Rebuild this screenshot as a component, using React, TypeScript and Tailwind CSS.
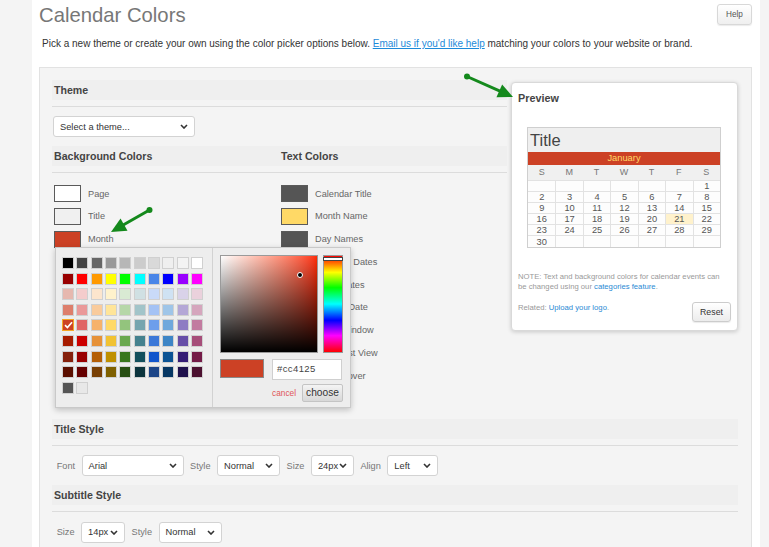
import React from "react";

const palette: string[][] = [
  ["#000000", "#444444", "#666666", "#999999", "#b7b7b7", "#cccccc", "#d9d9d9", "#efefef", "#f3f3f3", "#ffffff"],
  ["#980000", "#ff0000", "#ff9900", "#ffff00", "#00ff00", "#00ffff", "#4a86e8", "#0000ff", "#9900ff", "#ff00ff"],
  ["#e6b8af", "#f4cccc", "#fce5cd", "#fff2cc", "#d9ead3", "#d0e0e3", "#c9daf8", "#cfe2f3", "#d9d2e9", "#ead1dc"],
  ["#dd7e6b", "#ea9999", "#f9cb9c", "#ffe599", "#b6d7a8", "#a2c4c9", "#a4c2f4", "#9fc5e8", "#b4a7d6", "#d5a6bd"],
  ["#cc4125", "#e06666", "#f6b26b", "#ffd966", "#93c47d", "#76a5af", "#6d9eeb", "#6fa8dc", "#8e7cc3", "#c27ba0"],
  ["#a61c00", "#cc0000", "#e69138", "#f1c232", "#6aa84f", "#45818e", "#3c78d8", "#3d85c6", "#674ea7", "#a64d79"],
  ["#85200c", "#990000", "#b45f06", "#bf9000", "#38761d", "#134f5c", "#1155cc", "#0b5394", "#351c75", "#741b47"],
  ["#5b0f00", "#660000", "#783f04", "#7f6000", "#274e13", "#0c343d", "#1c4587", "#073763", "#20124d", "#4c1130"],
  ["#555555", "#e8e8e8"],
];

const textColors: { label: string; color: string }[] = [
  { label: "Calendar Title", color: "#555555" },
  { label: "Month Name", color: "#ffd966" },
  { label: "Day Names", color: "#555555" },
  { label: "Selected Dates", color: "#555555" },
  { label: "Other Dates", color: "#555555" },
  { label: "Today's Date", color: "#555555" },
  { label: "Event Window", color: "#555555" },
  { label: "Event List View", color: "#555555" },
  { label: "Event Hover", color: "#555555" },
];

const bgColors: { label: string; color: string }[] = [
  { label: "Page", color: "#ffffff" },
  { label: "Title", color: "#f0f0f0" },
  { label: "Month", color: "#cc4125" },
];

const weeks: (number | null)[][] = [
  [null, null, null, null, null, null, 1],
  [2, 3, 4, 5, 6, 7, 8],
  [9, 10, 11, 12, 13, 14, 15],
  [16, 17, 18, 19, 20, 21, 22],
  [23, 24, 25, 26, 27, 28, 29],
  [30, null, null, null, null, null, null],
];

function Chevron() {
  return (
    <svg width="8" height="5" viewBox="0 0 8 5">
      <path d="M1 1 L4 4 L7 1" fill="none" stroke="#333" strokeWidth="1.6" />
    </svg>
  );
}

function Sel({ className, value }: { className: string; value: string }) {
  return (
    <div
      className={
        "flex h-[21px] shrink-0 items-center justify-between rounded-[3px] border border-[#d3d3d3] bg-white pl-[6px] pr-[6px] text-[9.3px] leading-[12px] text-[#333] " +
        className
      }
    >
      <span>{value}</span>
      <Chevron />
    </div>
  );
}

function Band({ children }: { children: React.ReactNode }) {
  return (
    <>
      <div className="flex h-[20px] items-center bg-[#efefef] pl-[2px] text-[10.6px] font-bold leading-[12px] text-[#444]">
        {children}
      </div>
      <div className="mt-[6px] h-px bg-[#dcdcdc]" />
    </>
  );
}

function Label({ children }: { children: React.ReactNode }) {
  return <span className="text-[9.2px] leading-[12px] text-[#777]">{children}</span>;
}

function arrow(x1: number, y1: number, x2: number, y2: number, L = 15, W = 7) {
  const dx = x2 - x1;
  const dy = y2 - y1;
  const len = Math.sqrt(dx * dx + dy * dy);
  const ux = dx / len;
  const uy = dy / len;
  const bx = x2 - ux * L;
  const by = y2 - uy * L;
  const nx = -uy;
  const ny = ux;
  return {
    line: { x1, y1, x2: bx + ux * 2, y2: by + uy * 2 },
    pts: `${x2},${y2} ${bx + nx * W},${by + ny * W} ${bx - nx * W},${by - ny * W}`,
  };
}

function Arrows() {
  const list = [arrow(467, 76.5, 513, 97), arrow(149.5, 210, 111, 232), arrow(228.5, 403.5, 273, 381.5)];
  const g = "#14891c";
  return (
    <svg className="pointer-events-none absolute left-0 top-0" width="769" height="547" viewBox="0 0 769 547">
      {list.map((a, i) => (
        <g key={i}>
          <line x1={a.line.x1} y1={a.line.y1} x2={a.line.x2} y2={a.line.y2} stroke={g} strokeWidth="3" strokeLinecap="round" />
          <circle cx={a.line.x1} cy={a.line.y1} r="3" fill={g} />
          <polygon points={a.pts} fill={g} />
        </g>
      ))}
    </svg>
  );
}

function Popup() {
  return (
    <div className="absolute left-[3px] top-[62px] z-10 flex h-[161px] w-[296px] border border-[#c9c9c9] bg-[#ededed] shadow-[0_2px_6px_rgba(0,0,0,0.22)]">
      <div className="w-[157px] border-r border-[#d2d2d2] pl-[6px] pt-[9px]">
        <div className="grid grid-cols-[repeat(10,12px)] gap-x-[2.33px] gap-y-[3.6px]">
          {palette.map((row, ri) =>
            row.map((c, ci) => {
              const sel = ri === 4 && ci === 0;
              return (
                <div
                  key={ri + "-" + ci}
                  className={
                    sel
                      ? "flex h-[12px] w-[12px] items-center justify-center border border-[#f5a623]"
                      : "h-[12px] w-[12px] border border-[#d0d0d0]"
                  }
                  style={{ background: c }}
                >
                  {sel && (
                    <svg width="9" height="8" viewBox="0 0 9 8">
                      <path d="M1 4.2 L3.4 6.5 L8 1.2" fill="none" stroke="#fff" strokeWidth="1.7" />
                    </svg>
                  )}
                </div>
              );
            })
          )}
        </div>
      </div>
      <div className="flex-1 pl-[7px] pt-[7px]">
        <div className="flex">
          <div className="relative h-[98px] w-[98px] border border-[#9a9a9a] bg-linear-to-r from-white to-[#ff2b00]">
            <div className="absolute inset-0 bg-linear-to-t from-black to-transparent" />
            <div className="absolute left-[76px] top-[16px] h-[6px] w-[6px] rounded-full border border-white bg-black" />
          </div>
          <div className="relative ml-[5px] h-[98px] w-[20px] border border-[#9a9a9a] bg-[linear-gradient(to_bottom,#ff0000,#ffff00_17%,#00ff00_33%,#00ffff_50%,#0000ff_67%,#ff00ff_83%,#ff0000)]">
            <div className="absolute left-[-1px] right-[-1px] top-[1px] h-[4px] border border-[#444] bg-white" />
          </div>
        </div>
        <div className="mt-[6px] flex items-start">
          <div className="h-[19px] w-[44px] border border-[#8a8a8a] bg-[#cc4125]" />
          <div className="ml-[8px] flex h-[21px] w-[70px] items-center border border-[#cfcfcf] bg-white pl-[4px] text-[9.5px] tracking-[0.4px] text-[#444]">
            #cc4125
          </div>
        </div>
        <div className="mt-[4px] flex items-center pl-[52px]">
          <span className="text-[8.3px] leading-[10px] text-[#e0555a]">cancel</span>
          <div className="ml-[6px] flex h-[18px] w-[41px] items-center justify-center rounded-[2px] border border-[#c4c4c4] bg-linear-to-b from-[#f4f4f4] to-[#d8d8d8] text-[10.2px] leading-[12px] text-[#333]">
            choose
          </div>
        </div>
      </div>
    </div>
  );
}

function Preview() {
  return (
    <div className="ml-[4px] mt-[1.5px] h-[249px] w-[227px] shrink-0 rounded-[4px] border border-[#d9d9d9] bg-white shadow-[0_1px_4px_rgba(0,0,0,0.18)]">
      <div className="pl-[6px] pt-[9px] text-[10.8px] font-bold leading-[12px] text-[#444]">Preview</div>
      <div className="ml-[15px] mt-[23px] w-[194px] border border-[#cfcfcf]">
        <div className="flex h-[24px] items-center bg-[#efefef] pl-[2px] text-[16.5px] leading-[20px] text-[#444]">Title</div>
        <div className="flex h-[13.5px] items-center justify-center bg-[#cc4125] text-[9.3px] leading-[11px] text-[#ffd966]">
          January
        </div>
        <div className="grid h-[15px] grid-cols-7 items-center bg-[#f0f0f0] text-center text-[9px] leading-[11px] text-[#777]">
          {["S", "M", "T", "W", "T", "F", "S"].map((d, i) => (
            <span key={i}>{d}</span>
          ))}
        </div>
        {weeks.map((w, wi) => (
          <div key={wi} className="grid h-[11.1px] grid-cols-7">
            {w.map((d, di) => (
              <div
                key={di}
                className={
                  (di === 0 ? "border-t " : "border-l border-t ") +
                  "flex items-center justify-center border-[#e2e2e2] text-[9.3px] leading-[10px] text-[#555] " +
                  (d === 21 ? "bg-[#fff2cc]" : "bg-[#fdfdfd]")
                }
              >
                {d ?? ""}
              </div>
            ))}
          </div>
        ))}
      </div>
      <div className="mt-[24px] w-[215px] pl-[6px] text-[7.7px] leading-[10px] text-[#999]">
        <div>NOTE: Text and background colors for calendar events can</div>
        <div>
          be changed using our <span className="text-[#2a8ad4]">categories feature</span>.
        </div>
      </div>
      <div className="mt-[10px] flex items-start justify-between pl-[6px] pr-[6px]">
        <div className="pt-[1px] text-[7.7px] leading-[10px] text-[#999]">
          Related: <span className="text-[#2a8ad4]">Upload your logo</span>.
        </div>
        <div className="flex h-[20px] w-[39px] items-center justify-center rounded-[3px] border border-[#cccccc] bg-linear-to-b from-white to-[#ececec] text-[8.8px] leading-[10px] text-[#333] shadow-[0_1px_1px_rgba(0,0,0,0.08)]">
          Reset
        </div>
      </div>
    </div>
  );
}

export default function App() {
  return (
    <div className="relative h-[547px] w-[769px] overflow-hidden bg-[#f4f4f4] font-['Liberation_Sans',Arial,sans-serif]">
      <div className="ml-[32px] h-full w-[728px] bg-white px-[7px]">
        <div className="flex h-[31px] items-start justify-between">
          <div className="pt-[3px] text-[20.3px] leading-[24px] text-[#777]">Calendar Colors</div>
          <div className="mr-[1px] mt-[4px] flex h-[21px] w-[35px] items-center justify-center rounded-[3px] border border-[#d8d8d8] bg-linear-to-b from-white to-[#efefef] text-[8.2px] leading-[10px] text-[#555] shadow-[0_1px_1px_rgba(0,0,0,0.08)]">
            Help
          </div>
        </div>
        <div className="mt-[7px] pl-[3px] text-[10px] leading-[12px] text-[#333]">
          Pick a new theme or create your own using the color picker options below.{" "}
          <span className="text-[#1d8ad9] underline">Email us if you'd like help</span> matching your colors to your
          website or brand.
        </div>
        <div className="mt-[17px] h-[600px] w-[713px] border border-[#e2e2e2] bg-[#f4f4f4] pl-[12px] pr-[13px] pt-[12px]">
          <div className="flex items-start">
            <div className="w-[455px] shrink-0">
              <Band>Theme</Band>
              <div className="mt-[9px] pl-[1px]">
                <Sel className="w-[142px]" value="Select a theme..." />
              </div>
              <div className="mt-[9px] flex h-[20px] items-center bg-[#efefef] text-[10.6px] font-bold leading-[12px] text-[#444]">
                <span className="w-[229px] pl-[2px]">Background Colors</span>
                <span>Text Colors</span>
              </div>
              <div className="mt-[6px] h-px bg-[#dcdcdc]" />
              <div className="relative mt-[12px] flex">
                <div className="flex w-[229px] flex-col gap-[5.75px] pl-[2px]">
                  {bgColors.map((c) => (
                    <div key={c.label} className="flex h-[17px] items-center">
                      <div className="h-[17px] w-[27px] border border-[#5a5a5a]" style={{ background: c.color }} />
                      <span className="ml-[7px] text-[9.2px] leading-[12px] text-[#666]">{c.label}</span>
                    </div>
                  ))}
                </div>
                <div className="flex flex-col gap-[5.75px]">
                  {textColors.map((c) => (
                    <div key={c.label} className="flex h-[17px] items-center">
                      <div className="h-[17px] w-[27px] border border-[#5a5a5a]" style={{ background: c.color }} />
                      <span className="ml-[7px] whitespace-nowrap text-[9.2px] leading-[12px] text-[#666]">{c.label}</span>
                    </div>
                  ))}
                </div>
                <Popup />
              </div>
            </div>
            <Preview />
          </div>
          <div className="mt-[35px]">
            <Band>Title Style</Band>
            <div className="mt-[9px] flex items-center gap-[6.5px] pl-[4.7px]">
              <Label>Font</Label>
              <Sel className="w-[102px]" value="Arial" />
              <Label>Style</Label>
              <Sel className="w-[63px]" value="Normal" />
              <Label>Size</Label>
              <Sel className="w-[43px]" value="24px" />
              <Label>Align</Label>
              <Sel className="w-[51px]" value="Left" />
            </div>
            <div className="mt-[9px]">
              <Band>Subtitle Style</Band>
            </div>
            <div className="mt-[9.5px] flex items-center gap-[6.5px] pl-[4.7px]">
              <Label>Size</Label>
              <Sel className="w-[44px]" value="14px" />
              <Label>Style</Label>
              <Sel className="w-[63px]" value="Normal" />
            </div>
          </div>
        </div>
      </div>
      <Arrows />
    </div>
  );
}
